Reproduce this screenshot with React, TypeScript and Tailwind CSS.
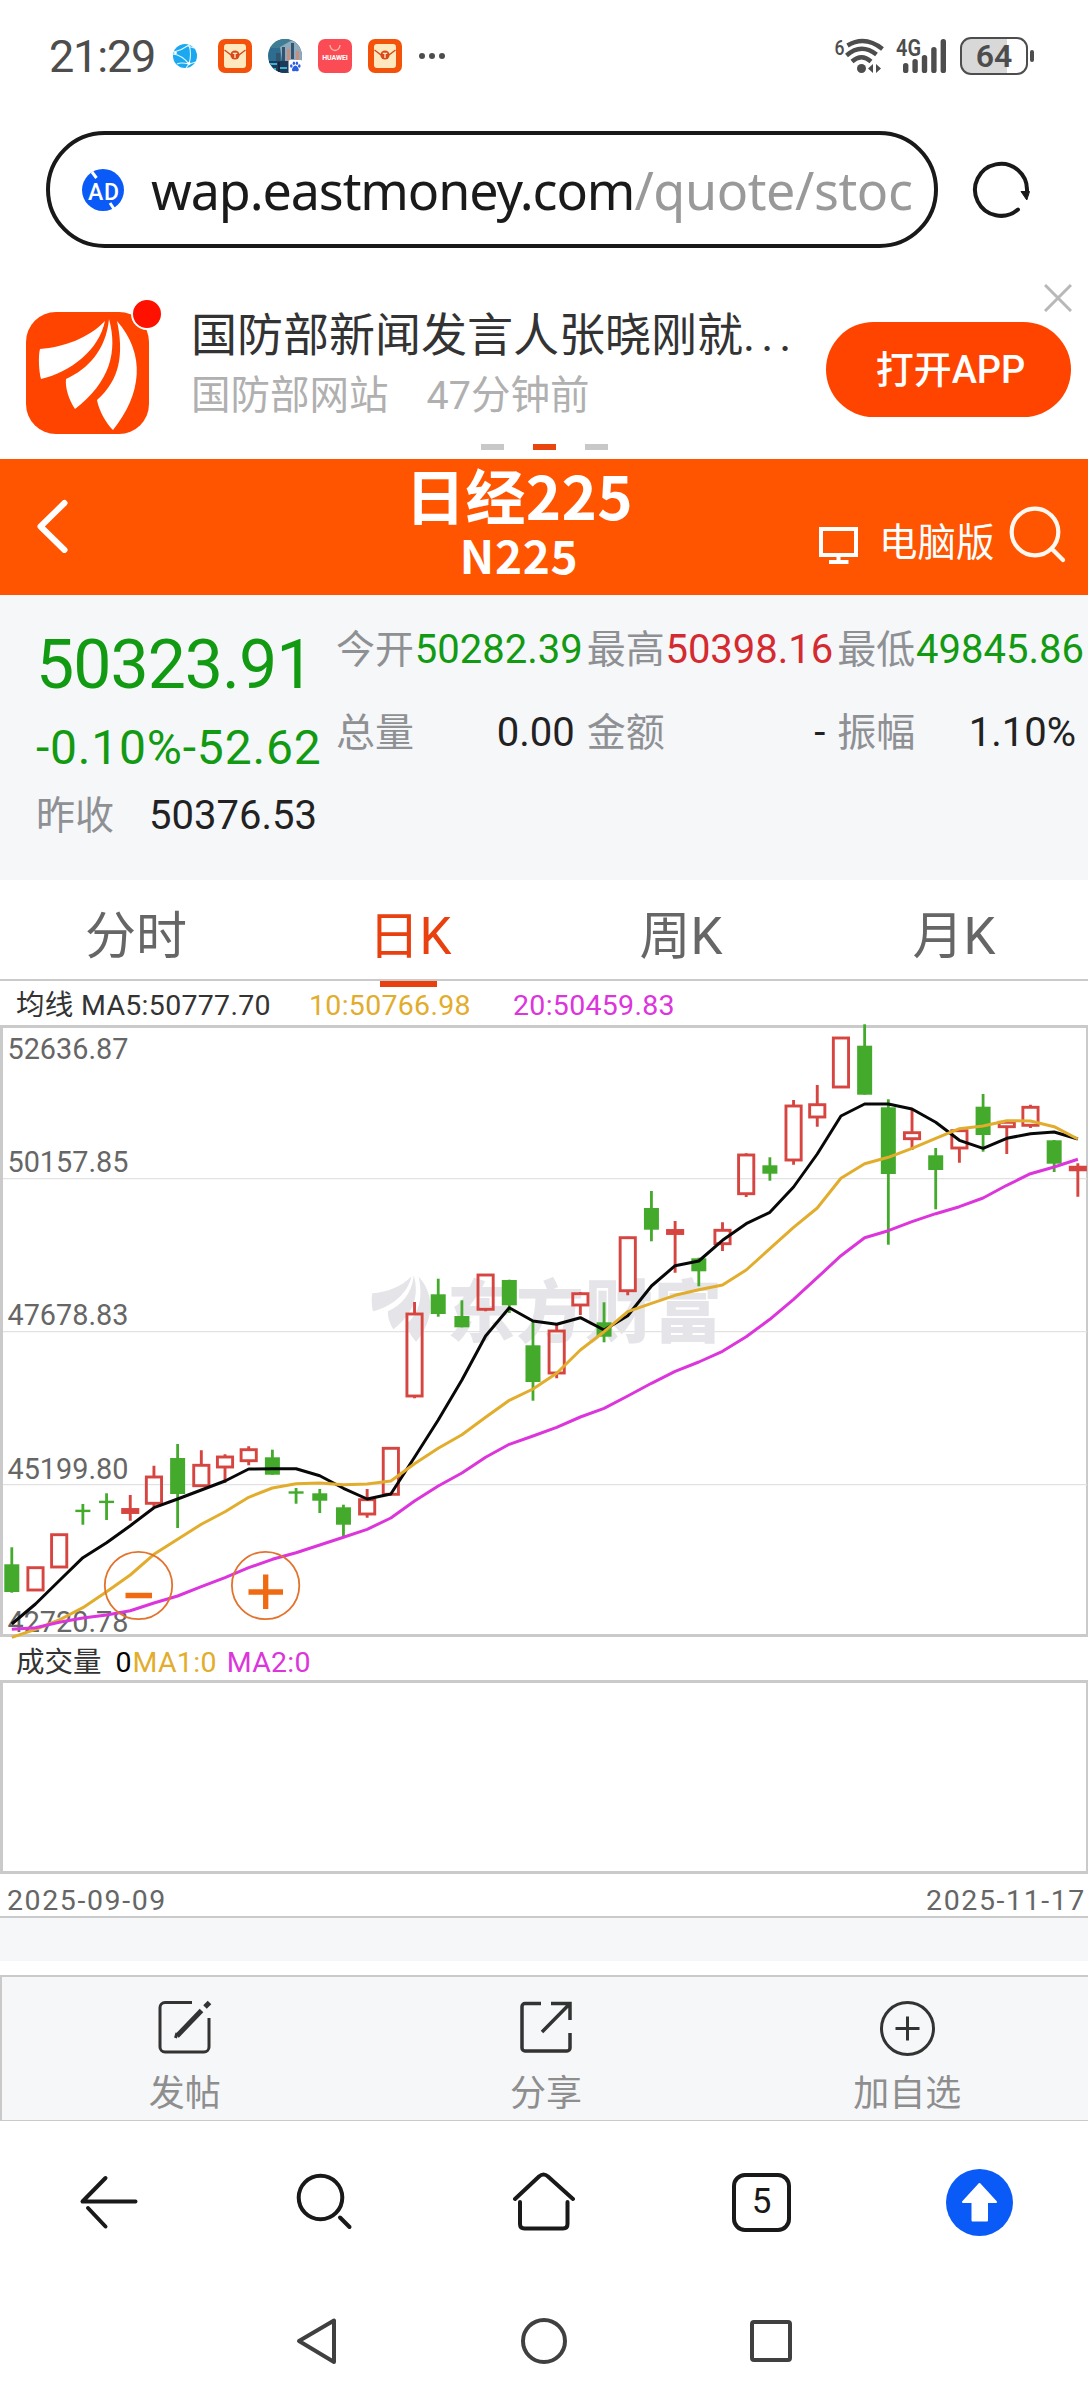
import type { ReactNode } from "react";
import { clsx } from "clsx";

const CJK = "font-['Noto_Sans_CJK_SC',sans-serif]";

// [high, top, bottom, low, up] in chart units, 0 is the top of the frame
const candles: [number, number, number, number, boolean][] = [
  [522.3, 539.3, 567, 567.7, false],
  [542.7, 542.7, 565, 565, true],
  [509.7, 509.7, 542, 542, true],
  [479, 484.7, 485.7, 499.7, false],
  [468.3, 475.7, 477, 495, false],
  [470, 484.5, 487.5, 495.7, true],
  [440.7, 452, 478.3, 481.7, true],
  [419, 433, 469, 503, false],
  [425.3, 440.3, 460.7, 461.3, true],
  [429.3, 432, 442, 457.7, true],
  [421.3, 424.7, 435.7, 440.3, true],
  [424.7, 432.3, 449.7, 449.7, false],
  [463, 466.3, 467.6, 478.7, false],
  [464, 468.3, 475.7, 488, false],
  [479.7, 482.3, 499.7, 511, false],
  [464, 474.7, 489, 492.7, true],
  [423.3, 423.3, 469.3, 470.3, true],
  [277, 289, 371, 373.3, true],
  [253.7, 269.3, 289, 291.7, false],
  [275.3, 291, 302.3, 302.3, false],
  [249.3, 250, 284.3, 286.3, true],
  [254.7, 255, 280.3, 288, false],
  [296.3, 320.3, 357, 375.7, false],
  [299.7, 306, 348, 353.3, true],
  [267, 268.7, 280, 290, true],
  [277.3, 297.3, 311.7, 317.3, false],
  [211.7, 212.7, 265.7, 270.3, true],
  [166, 183, 204.7, 216.3, false],
  [196, 205.5, 208.5, 247.7, true],
  [232.7, 233.3, 246.3, 261.3, false],
  [197.3, 205.3, 218.7, 226, true],
  [128.3, 130, 168.7, 172, true],
  [132.3, 140.3, 148.7, 155.7, false],
  [75, 81, 135, 139.7, true],
  [60, 79.7, 92, 101.7, true],
  [12.3, 13, 62, 62.3, true],
  [-0.7, 20.7, 69.7, 69.7, false],
  [74.3, 82.3, 149, 219.7, false],
  [85, 107.7, 113.7, 125, true],
  [123, 130.3, 145, 184.3, false],
  [103.3, 105.7, 123, 137.7, true],
  [69, 81.7, 110, 126.7, false],
  [96, 97.3, 101.7, 129, true],
  [79.7, 82.3, 100.3, 103, true],
  [115, 115.3, 138.7, 147, false],
  [138.3, 142.2, 144.8, 171.7, true],
];

const ma5 = [
  599, 579, 555.7, 532.7, 517.7, 500.7, 482.7, 474, 465, 456, 444, 443.7, 443.7, 450.7, 463.3, 474,
  469, 432.3, 395, 355, 311, 282.7, 296, 299.3, 292.7, 305, 290.7, 261, 240.7, 236, 215.3, 198.7,
  187.3, 162, 129, 91, 79, 79, 84, 97.3, 115.3, 123.3, 113.3, 108.7, 107, 114,
];
const ma10 = [
  612.3, 604.3, 595, 582.7, 566.7, 550, 529.3, 514.3, 499.3, 486.7, 472.3, 463, 458.7, 458, 459.7,
  459, 456, 438.7, 423.3, 409.7, 392.3, 375.3, 364, 348.3, 325, 306.7, 286.7, 278.3, 270.3, 264.7,
  260, 245, 223.7, 202.3, 183, 153.3, 138.7, 132.3, 123.3, 113.3, 103.7, 101, 95.7, 96, 101.7, 114,
];
const ma20 = [
  604.3, 602.7, 597.3, 593, 590, 585.7, 578, 571, 561.7, 552.7, 542.7, 534.3, 527.7, 520, 512.3,
  504.3, 493, 476, 461, 448, 432.3, 419.3, 411, 402.3, 392, 383.3, 371, 358.3, 346.3, 337, 326.3,
  311.7, 294.3, 274.3, 252.7, 230.7, 212.7, 205.7, 196.7, 188.7, 181.7, 173, 160.3, 148.7, 142,
  134.3,
];

const axis = [
  { label: "52636.87", y: 34 },
  { label: "50157.85", y: 147 },
  { label: "47678.83", y: 300 },
  { label: "45199.80", y: 454 },
  { label: "42720.78", y: 607 },
];

const candleX = (i: number) => 11.8 + i * 23.69;
const toPoints = (values: number[]) => values.map((v, i) => `${candleX(i)},${v}`).join(" ");

function EnvelopeIcon() {
  return (
    <svg viewBox="0 0 34 34" className="size-[34px]">
      <rect width="34" height="34" rx="7" fill="#f4510b" />
      <rect x="6" y="5" width="22" height="24" rx="3" fill="#fde9bd" />
      <path d="M6.5 11 L13 16 M27.5 11 L21 16" stroke="#d8481c" strokeWidth="1.4" />
      <circle cx="17" cy="16" r="4.6" fill="#d8481c" />
      <path d="M14.8 14.3 H19.2 M17 14.3 V19" stroke="#fde9bd" strokeWidth="1.3" />
    </svg>
  );
}

function StatusBar() {
  return (
    <div className="flex h-[112px] items-center pl-[49px] text-[#4d4d4d]">
      <span className="w-[124px] text-[45px] leading-none tracking-[-1.2px]">21:29</span>
      <svg viewBox="0 0 24 24" className="size-6">
        <circle cx="12" cy="12" r="12" fill="#1aa8f0" />
        <path
          d="M0 10 Q9 11 16 20 M1 8 Q9 6 16 1 M16 1 Q19 10 16 20 M16 20 L23 18 M16 20 L13 24 M4 20 Q8 18 16 20 M15 2 L21 4"
          fill="none"
          stroke="#e4f6ff"
          strokeWidth="1.1"
        />
        <circle cx="16" cy="19.5" r="1.6" fill="#fff" />
        <circle cx="2.5" cy="9" r="1.4" fill="#fff" />
      </svg>
      <div className="ml-[21px] flex items-center gap-4">
        <EnvelopeIcon />
        <svg viewBox="0 0 34 34" className="size-[34px]">
          <defs>
            <clipPath id="city">
              <circle cx="17" cy="17" r="17" />
            </clipPath>
          </defs>
          <g clipPath="url(#city)">
            <rect width="34" height="34" fill="#2d6d90" />
            <rect width="34" height="9" fill="#3f7d95" />
            <path d="M12 8 L26 0 L34 8 V22 H14 Z" fill="#8fa9bd" />
            <path d="M8 14 H12 V22 H8 Z M14 8 H17 V22 H14 Z M23 4 H26 V20 H23 Z" fill="#33546f" />
            <path d="M19 10 H22 V22 H19 Z M28 12 H31 V22 H28 Z" fill="#c98f7d" />
            <rect y="22" width="34" height="12" fill="#1d3a58" />
            <path d="M2 25 H9 M11 29 H19 M4 30 H8" stroke="#35b3d8" strokeWidth="2" />
            <path d="M11 23 V33" stroke="#16263c" strokeWidth="2" />
          </g>
          <rect x="20.5" y="21" width="13.5" height="13" rx="1.5" fill="#fff" />
          <g fill="#2b5fe0">
            <ellipse cx="23.3" cy="27" rx="1.3" ry="1.7" />
            <ellipse cx="25.9" cy="24.3" rx="1.2" ry="1.7" />
            <ellipse cx="28.9" cy="24.3" rx="1.2" ry="1.7" />
            <ellipse cx="31.3" cy="27" rx="1.3" ry="1.7" />
            <path d="M27.4 26.4 C29 26.4 31 29.5 30.8 31 C30.4 33 28.5 32 27.4 32 C26.2 32 24.3 33 24 31 C23.8 29.5 25.8 26.4 27.4 26.4 Z" />
          </g>
        </svg>
        <div className="flex size-[34px] flex-col items-center rounded-[7px] bg-[#fb4c56]">
          <svg viewBox="0 0 12 8" className="mt-[5px] h-2 w-3">
            <path d="M1 1 A5 5.5 0 0 0 11 1" fill="none" stroke="#ffb9a6" strokeWidth="1.3" />
          </svg>
          <span className="mt-[3px] text-[7px] font-bold leading-none tracking-[-0.1px] text-white">HUAWEI</span>
        </div>
        <EnvelopeIcon />
      </div>
      <div className="ml-[17px] flex gap-1">
        <i className="size-1.5 rounded-full bg-[#4d4d4d]" />
        <i className="size-1.5 rounded-full bg-[#4d4d4d]" />
        <i className="size-1.5 rounded-full bg-[#4d4d4d]" />
      </div>

      <div className="ml-auto flex items-center pr-[54px]">
        <svg viewBox="0 0 52 38" className="h-[38px] w-[52px] overflow-visible" fill="none" stroke="#4d4d4d">
          <text x="0.5" y="17.5" fontSize="21" fontWeight="500" fill="#4d4d4d" stroke="none" textLength="10" lengthAdjust="spacingAndGlyphs">
            6
          </text>
          <g strokeWidth="4.4">
            <path d="M13.5 8.5 Q31 -2 48.5 12" />
            <path d="M12.5 18.5 Q27 5.5 42.5 17.5" />
            <path d="M18 24.5 Q27.5 16 37 24.5" />
          </g>
          <circle cx="27.5" cy="31.5" r="4.5" fill="#4d4d4d" stroke="none" />
          <path d="M39 27 V36 L34 31.5 Z M42 27 V36 L47 31.5 Z" fill="#4d4d4d" stroke="none" />
        </svg>
        <svg viewBox="0 0 52 38" className="ml-2.5 h-[38px] w-[52px] overflow-visible" fill="#4d4d4d">
          <text x="0" y="19" fontSize="23" fontWeight="600" textLength="25" lengthAdjust="spacingAndGlyphs">
            4G
          </text>
          <rect x="7" y="26" width="5.4" height="10" rx="2.6" />
          <rect x="16.4" y="22" width="5.4" height="14" rx="2.6" />
          <rect x="25.8" y="18" width="5.4" height="18" rx="2.6" />
          <rect x="35.2" y="10" width="5.4" height="26" rx="2.6" />
          <rect x="44.6" y="2" width="5.4" height="34" rx="2.6" />
        </svg>
        <div className="ml-3 flex h-[38px] w-[68px] items-center justify-center rounded-[11px] border-[2.5px] border-[#4d4d4d] bg-linear-to-r from-[#d8d8d8] from-70% to-white to-70% text-[32px] font-semibold leading-none">
          64
        </div>
        <i className="ml-0.5 h-3 w-[4px] rounded-full bg-[#4d4d4d]" />
      </div>
    </div>
  );
}

function AddressBar() {
  return (
    <div className="flex h-[155px] items-center pl-[46px]">
      <div className="flex h-[117px] w-[892px] items-center rounded-full border-4 border-[#191919] pl-8">
        <svg viewBox="0 0 42 42" className="size-[42px]">
          <circle cx="21" cy="21" r="21" fill="#0a5af8" />
          <path d="M10 3 L14.5 9 M28 34 L32 40" stroke="#fff" strokeWidth="3" />
          <text x="6" y="30.5" fontSize="23" fontWeight="500" fill="#fff" textLength="31">
            AD
          </text>
        </svg>
        <span className="ml-[27px] whitespace-nowrap font-['Noto_Sans',sans-serif] text-[52px] leading-none tracking-[-1.1px] text-[#1a1a1a]">
          wap.eastmoney.com<span className="tracking-[-0.4px] text-[#999]">/quote/stoc</span>
        </span>
      </div>
      <svg viewBox="0 0 60 60" className="ml-[33px] size-[60px]" fill="none">
        <path d="M56 31 A26 26 0 1 0 47 49.5" stroke="#191919" strokeWidth="4" strokeLinecap="round" />
        <path d="M50 31.5 H58.5 L55.8 40 Z" fill="#191919" stroke="#191919" strokeLinejoin="round" />
      </svg>
    </div>
  );
}

function Feather() {
  return (
    <>
      <path d="M14 37 C38 35 63 26 79 9 C73 38 45 60 15 67 C13 60 12 44 14 37 Z" />
      <path d="M83 7 C92 40 84 70 49 97 C43 88 39 76 40 67 C62 57 80 38 83 7 Z" />
      <path d="M91 9 C120 42 116 82 87 118 C80 111 73 99 71 88 C94 68 98 42 91 9 Z" />
    </>
  );
}

function AppBanner() {
  return (
    <div className="relative h-48">
      <div className="flex">
        <div className="relative ml-[26px] mt-[45px] h-[122px] w-[123px]">
          <svg viewBox="0 0 123 122" className="h-full w-full rounded-[30px] bg-[#ff4400]" fill="#fff">
            <Feather />
          </svg>
          <i className="absolute -right-[14px] -top-[14px] size-[32px] rounded-full border-2 border-white bg-[#ff1100]" />
        </div>
        <div className="ml-[42px] mt-[39px] w-[621px]">
          <div className="h-[58px] whitespace-nowrap text-[46px] leading-[58px] text-[#333]">
            国防部新闻发言人张晓刚就<span className="tracking-[6px]">...</span>
          </div>
          <div className="mt-1 flex h-[56px] gap-[38px] text-[39.5px] leading-[56px] text-[#b0b0b0]">
            <span>国防部网站</span>
            <span>47分钟前</span>
          </div>
        </div>
        <button className="ml-[14px] mt-[55px] h-[95px] w-[245px] rounded-full bg-[#ff4400] pl-1 text-[38px] font-medium leading-none text-white">
          打开APP
        </button>
      </div>
      <svg viewBox="0 0 28 28" className="absolute left-[1044px] top-[17px] size-7" stroke="#b8b8b8" strokeWidth="3">
        <path d="M1 1 L27 27 M27 1 L1 27" />
      </svg>
      <div className="absolute left-[481px] top-[177px] flex gap-[29px]">
        <i className="h-1.5 w-[23px] bg-[#c8c8c8]" />
        <i className="h-1.5 w-[23px] bg-[#e8450f]" />
        <i className="h-1.5 w-[23px] bg-[#c8c8c8]" />
      </div>
    </div>
  );
}

function Header() {
  return (
    <header className="grid h-[136px] grid-cols-[337px_360px_1fr] bg-[#ff5500] text-white">
      <svg viewBox="0 0 34 54" className="ml-[36px] mt-[40px] h-[54px] w-[34px]" fill="none">
        <path d="M28.5 4 L4.5 27.5 L28.5 51" stroke="#fff" strokeWidth="6" strokeLinecap="round" strokeLinejoin="round" />
      </svg>
      <div className={clsx("pl-1 text-center font-bold", CJK)}>
        <h1 className="h-[69px] text-[60px] leading-[69px] tracking-[0.3px]">日经225</h1>
        <p className="h-[52px] text-[46px] leading-[52px] tracking-[0.6px]">N225</p>
      </div>
      <div className="flex items-start">
        <svg viewBox="0 0 40 40" className="ml-[121px] mt-[66px] size-10" fill="none" stroke="#fff" strokeWidth="4">
          <rect x="3" y="4" width="35" height="26" />
          <path d="M20.5 30 V36 M11 37 H30.5" />
        </svg>
        <span className="ml-[21px] mt-[58px] text-[38.5px] leading-[52px]">电脑版</span>
        <svg viewBox="0 0 58 58" className="ml-[13px] mt-[47px] size-[58px]" fill="none" stroke="#fff8f0" strokeWidth="4.2">
          <circle cx="27" cy="26" r="23.3" />
          <path d="M44 43 L55 54" strokeLinecap="round" />
        </svg>
      </div>
    </header>
  );
}

const stats = [
  { label: "今开", value: "50282.39", color: "text-[#129a12] pr-1" },
  { label: "最高", value: "50398.16", color: "text-[#d42a30] pr-1" },
  { label: "最低", value: "49845.86", color: "text-[#129a12] pr-1" },
  { label: "总量", value: "0.00", color: "text-[#222] pr-3" },
  { label: "金额", value: "-", color: "text-[#222] pr-3" },
  { label: "振幅", value: "1.10%", color: "text-[#222] pr-3" },
];

function Quote() {
  return (
    <section className="flex h-[285px] bg-[#f5f7f9] pt-[25px]">
      <div className="w-[300px] whitespace-nowrap pl-9 text-[#129a12]">
        <div className="h-[90px] text-[68px] leading-[90px] tracking-[-1px]">50323.91</div>
        <div className="h-[76px] text-[48px] leading-[76px] tracking-[0.8px]">-0.10%-52.62</div>
        <div className="flex h-[60px] gap-[35px] text-[39px] leading-[60px]">
          <span className="text-[#8e9094]">昨收</span>
          <span className="text-[40px] text-[#222]">50376.53</span>
        </div>
      </div>
      <div className="ml-9 grid h-[143px] w-[753px] grid-cols-3 gap-y-[23px]">
        {stats.map((s) => (
          <div key={s.label} className="flex h-[60px] justify-between whitespace-nowrap text-[39px] leading-[60px]">
            <span className="text-[#8e9094]">{s.label}</span>
            <span className={clsx("text-[40px]", s.color)}>{s.value}</span>
          </div>
        ))}
      </div>
    </section>
  );
}

function Tabs() {
  return (
    <nav className="grid h-[101px] grid-cols-4 border-b-2 border-[#cacaca] text-center text-[51px] leading-[114px] text-[#666]">
      <span>分时</span>
      <span className="relative pl-1 text-[#e8400f]">
        日K
        <i className="absolute left-[108px] top-[101px] h-1.5 w-[57px] bg-[#e8400f]" />
      </span>
      <span className="pl-0.5">周K</span>
      <span className="pl-1">月K</span>
    </nav>
  );
}

function KLine() {
  return (
    <div className="h-[612px] border-y-3 border-l-3 border-r-2 border-[#cacaca]">
      <svg viewBox="3 3 1083 606" className="h-[606px] w-[1083px] overflow-visible">
        <path d="M3 153.7 H1087 M3 306.6 H1087 M3 459.7 H1087" stroke="#e2e2e2" strokeWidth="1.3" />
        <g fill="#e5e5e9">
          <g transform="translate(364 246) scale(0.6)">
            <Feather />
          </g>
          <text x="447" y="312" fontSize="68" fontWeight="900" className={CJK} textLength="275">
            东方财富
          </text>
        </g>
        <g fontSize="28.8" fill="#666">
          {axis.map((a) => (
            <text key={a.label} x="7.5" y={a.y}>
              {a.label}
            </text>
          ))}
        </g>
        {candles.map(([high, top, bottom, low, up], i) => {
          const x = candleX(i);
          if (up) {
            return (
              <g key={i} stroke="#d64540" strokeWidth="2.9" fill="none">
                <path d={`M${x} ${high} V${top} M${x} ${bottom} V${low}`} />
                <rect x={x - 7.6} y={top} width="15.2" height={bottom - top} fill={bottom - top < 4 ? "#d64540" : "none"} />
              </g>
            );
          }
          return (
            <g key={i} fill="#43aa2c">
              <rect x={x - 1.4} y={high} width="2.8" height={low - high} />
              <rect x={x - 7.5} y={top} width="15" height={Math.max(bottom - top, 2.4)} />
            </g>
          );
        })}
        <g fill="none" strokeWidth="3" strokeLinejoin="round">
          <polyline points={toPoints(ma5)} stroke="#080808" />
          <polyline points={toPoints(ma10)} stroke="#e2ad2c" />
          <polyline points={toPoints(ma20)} stroke="#dc35dc" />
        </g>
        <g fill="none" stroke="#e2732c" strokeWidth="1.8">
          <circle cx="138.5" cy="560.5" r="33.7" />
          <circle cx="265.6" cy="560.5" r="33.7" />
        </g>
        <path d="M125.5 570.5 H152 M248.5 567 H283 M265.7 549.5 V584" stroke="#ef6a12" strokeWidth="5.3" />
      </svg>
    </div>
  );
}

function Chart() {
  return (
    <section className="whitespace-nowrap text-[28.5px]">
      <div className="flex h-11 pl-4 pt-[5px] leading-[40px] tracking-[0.3px]">
        <span className="w-[293px] text-[#333]">均线 MA5:50777.70</span>
        <span className="w-[204px] text-[#e2ad2c]">10:50766.98</span>
        <span className="text-[#dc35dc]">20:50459.83</span>
      </div>
      <KLine />
      <div className="flex h-[43px] pl-4 pt-[6px] leading-[40px]">
        <span className="text-[#333]">成交量</span>
        <span className="ml-[14px] text-black">0</span>
        <span className="ml-px tracking-[0.3px] text-[#e2ad2c]">MA1:0</span>
        <span className="ml-2.5 tracking-[0.3px] text-[#dc35dc]">MA2:0</span>
      </div>
      <div className="h-[194px] border-y-3 border-l-3 border-r-2 border-[#cacaca]" />
      <div className="flex h-11 justify-between border-b-2 border-[#cacaca] pl-[7px] pr-0.5 leading-[54px] tracking-[1.6px] text-[#666]">
        <span>2025-09-09</span>
        <span>2025-11-17</span>
      </div>
      <div className="h-[43px] bg-[#f6f7f9]" />
    </section>
  );
}

function Action({ label, children }: { label: string; children: ReactNode }) {
  return (
    <div className="flex flex-col items-center pt-[21px]">
      <svg viewBox="0 0 60 60" className="size-[60px]" fill="none" stroke="#333" strokeWidth="3">
        {children}
      </svg>
      <span className="mt-[11px] text-[36px] leading-[50px] text-[#8e8e8e]">{label}</span>
    </div>
  );
}

function Actions() {
  return (
    <section className="mt-[14px] grid h-[146px] grid-cols-3 border-b border-l-2 border-t-2 border-[#cacaca] bg-[#f6f7f9] pl-0.5">
      <Action label="发帖">
        <path d="M37 4.5 H10 A5 5 0 0 0 5 9.5 V49 A5 5 0 0 0 10 54 H49 A5 5 0 0 0 54 49 V20" />
        <path d="M22 38 L46.5 12.5 M50 9 L54.5 4.5" strokeWidth="5" />
        <path d="M20.5 40 L22 35" />
      </Action>
      <Action label="分享">
        <path d="M25 5.5 H9 A3 3 0 0 0 6 8.5 V50 A3 3 0 0 0 9 53 H51 A3 3 0 0 0 54 50 V35" strokeWidth="3.5" />
        <path d="M35 5.5 H54 V22 M54 5.5 L26 34" strokeWidth="3.5" />
      </Action>
      <Action label="加自选">
        <circle cx="30.5" cy="30.5" r="26" />
        <path d="M30.5 18.5 V42.5 M18.5 30.5 H42.5" />
      </Action>
    </section>
  );
}

function BrowserNav() {
  return (
    <nav className="grid h-[162px] grid-cols-5 items-center justify-items-center text-[#191919]">
      <svg viewBox="0 0 60 60" className="size-[60px]" fill="none" stroke="currentColor" strokeWidth="4" strokeLinecap="round">
        <path d="M26.5 6 L3.5 29.5 H56.5" strokeLinejoin="round" />
        <path d="M9 36 L26.5 54.5" />
      </svg>
      <svg viewBox="0 0 60 60" className="size-[60px]" fill="none" stroke="currentColor" strokeWidth="4" strokeLinecap="round">
        <circle cx="24.5" cy="25.5" r="21.8" />
        <path d="M44 45.5 L53.5 55" />
      </svg>
      <svg viewBox="0 0 64 64" className="size-16" fill="none" stroke="currentColor" strokeWidth="4" strokeLinecap="round">
        <path d="M3 29 L27 6.5 Q31.5 2.5 36 6.5 L61 29" />
        <path d="M8 32 V54 Q8 58.5 12.5 58.5 H51 Q55.5 58.5 55.5 54 V32" />
      </svg>
      <div className="flex size-[59px] items-center justify-center rounded-[13px] border-4 border-current pb-0.5 text-[35px] leading-none">
        5
      </div>
      <svg viewBox="0 0 67 67" className="size-[67px]">
        <circle cx="33.5" cy="33.5" r="33.5" fill="#0a5af8" />
        <path
          d="M33.5 15 L50 33 H41 V51.5 H26.5 V33 H17 Z"
          fill="#fff"
          stroke="#fff"
          strokeWidth="2"
          strokeLinejoin="round"
        />
      </svg>
    </nav>
  );
}

function SystemNav() {
  return (
    <nav className="mx-auto mt-[33px] grid h-[50px] w-[680px] grid-cols-3 items-center justify-items-center">
      <svg viewBox="0 0 48 48" className="size-12" fill="none" stroke="#404040" strokeWidth="4" strokeLinejoin="round">
        <path d="M6 24 L41 3.5 V45 Z" />
      </svg>
      <svg viewBox="0 0 48 48" className="size-12" fill="none" stroke="#404040" strokeWidth="4">
        <circle cx="24" cy="24" r="21" />
      </svg>
      <div className="size-[42px] rounded-[4px] border-4 border-[#404040]" />
    </nav>
  );
}

export default function App() {
  return (
    <main className="h-[2400px] w-[1088px] overflow-hidden bg-white font-[Roboto,'Noto_Sans_CJK_SC',sans-serif]">
      <StatusBar />
      <AddressBar />
      <AppBanner />
      <Header />
      <Quote />
      <Tabs />
      <Chart />
      <Actions />
      <BrowserNav />
      <SystemNav />
    </main>
  );
}
